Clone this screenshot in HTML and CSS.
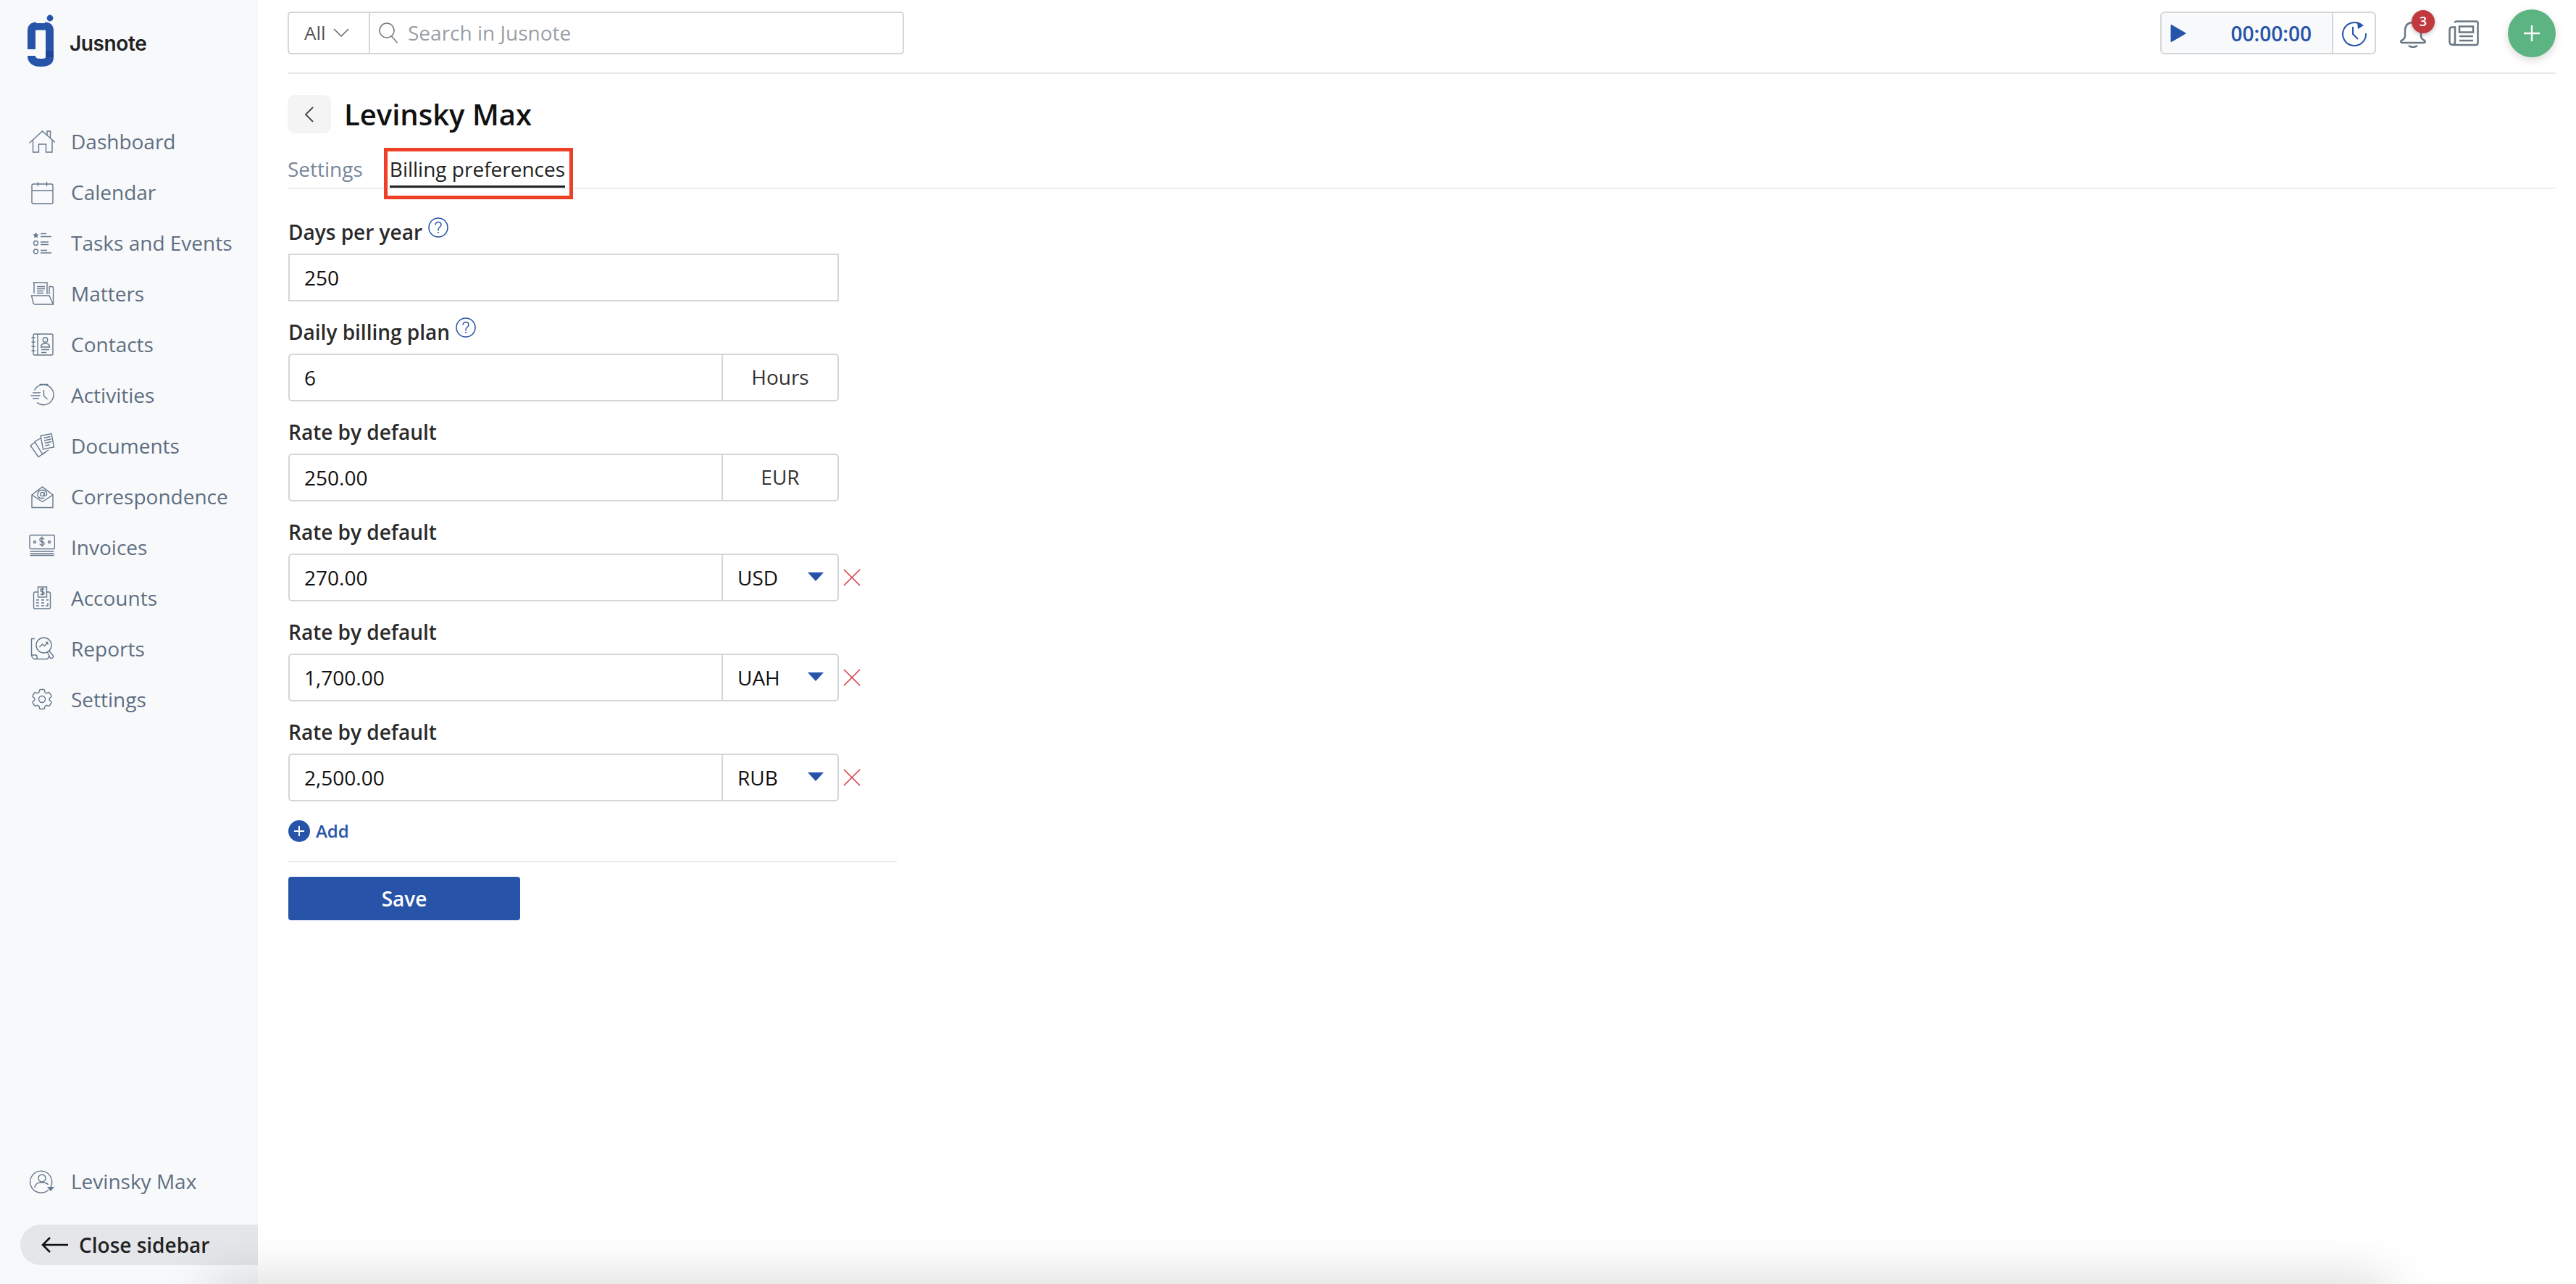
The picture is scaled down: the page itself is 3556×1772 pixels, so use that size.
FILE: index.html
```html
<!DOCTYPE html>
<html lang="en">
<head>
    <meta charset="UTF-8">
    <title>Jusnote</title>
    <link rel="stylesheet" href="styles.css">
</head>
<body>
<div class="app">
    <aside class="sidebar">
        <div class="logo">
            <svg class="logo-mark" viewBox="0 0 40 76" width="40" height="76">
                <circle cx="32" cy="6" r="4.400" fill="#2754a8"/>
                <path d="M6.500 49V23Q6.500 17 13 17H25Q31.500 17 31.500 23V60Q31.500 67.500 19 67.500Q6.500 67.500 6.500 58" fill="none" stroke="#2754a8" stroke-width="11"/>
                <rect x="26" y="51" width="11" height="9" fill="#1f4596"/>
                <rect x="0" y="50" width="13" height="2.500" fill="#f8f9fb"/>
                <rect x="13" y="11" width="12" height="2" fill="#f8f9fb"/>
            </svg>
            <span class="logo-text">Jusnote</span>
        </div>
        <nav class="nav">
            <a class="nav-item">
                <svg class="nav-icon" viewBox="0 0 36 36"><path d="M0.500 20.500 18.500 4 36 19.500M25 10V4h4.500v10M5.500 16.500V33h8V22h10v11h8.500V16.500"/></svg>
                <span>Dashboard</span>
            </a>
            <a class="nav-item">
                <svg class="nav-icon" viewBox="0 0 36 36"><rect x="4" y="7" width="29" height="27" rx="2"/><path d="M4 16h29M12.500 4v6M24.500 4v6"/></svg>
                <span>Calendar</span>
            </a>
            <a class="nav-item">
                <svg class="nav-icon" viewBox="0 0 36 36"><path d="M9.500 3.500 10.800 6.200 13.500 6.500 11.500 8.500 12 11.200 9.500 9.900 7 11.200 7.500 8.500 5.500 6.500 8.200 6.200Z" fill="#66788c" stroke="none"/><circle cx="9.500" cy="18.500" r="3"/><circle cx="9.500" cy="30" r="3"/><path d="M16 5.500h8M16 9.500h15M16 17h11M16 20.500h11M16 28.500h9M16 32h15"/></svg>
                <span>Tasks and Events</span>
            </a>
            <a class="nav-item">
                <svg class="nav-icon" viewBox="0 0 36 36"><path d="M7 18V4.500Q7 3 5.500 3H25v16M5.500 3H8M11 8.500h11M11 11.500h11M11 14.500h9M11 17.500h9M28 8.500h3.500q2 0 2 2V32M28 8.500v10.500"/><path d="M3.500 21H28l5.500 12H8.500Q7 33 6 31.500Z"/></svg>
                <span>Matters</span>
            </a>
            <a class="nav-item">
                <svg class="nav-icon" viewBox="0 0 36 36"><rect x="6" y="4" width="27" height="29" rx="2"/><path d="M12 4v29M3.500 9h5M3.500 15h5M3.500 21h5M3.500 27h5"/><circle cx="22.500" cy="12" r="3.200"/><path d="M16.500 22q0-5 6-5t6 5ZM17 25.500h11M17 29.500h7"/></svg>
                <span>Contacts</span>
            </a>
            <a class="nav-item">
                <svg class="nav-icon" viewBox="0 0 36 36"><path d="M14.500 3.500h12M7.500 11.500A14 14 0 1 1 11 28.500"/><path d="M20.500 11v8.500l5 4.500M5 15h11M2.500 19h13M5 23h9"/></svg>
                <span>Activities</span>
            </a>
            <a class="nav-item">
                <svg class="nav-icon" viewBox="0 0 36 36"><path d="M16 4.500 31 1.500 34.500 20 19.500 23Z"/><path d="M20.500 7.500l9-2M21 11l9.500-2M21.700 14.500l9.500-2M22.400 18l6-1.300"/><path d="M16.500 7.500 8 12.500 18.500 29.500 27 24"/><path d="M9 13 2 18 13 33.500 23 27"/></svg>
                <span>Documents</span>
            </a>
            <a class="nav-item">
                <svg class="nav-icon" viewBox="0 0 36 36"><path d="M4 16V33.500H33V16M4 16 18.500 5 33 16 18.500 25.500Z"/><circle cx="18.500" cy="15" r="2.600"/><path d="M21.100 12.500v3.500q0 2 1.900 1.200 2-1 1.500-3.500-1-4.500-6-4.500-6 0-6.500 5.500-.4 5.500 5.500 6 2 0 3.500-.7"/></svg>
                <span>Correspondence</span>
            </a>
            <a class="nav-item">
                <svg class="nav-icon" viewBox="0 0 36 36"><rect x="1" y="1.500" width="34.500" height="19" rx="2"/><path d="M1.500 24h33M1.500 27h33M1.500 29.500h33M21 7.500q-1-2-3-2-3 0-3 2.500t3 2.500q3 .5 3 2.800T18 15.500q-2.300 0-3.300-2M18 3.500v14"/><circle cx="8" cy="11" r="1.500"/><circle cx="28" cy="11" r="1.500"/></svg>
                <span>Invoices</span>
            </a>
            <a class="nav-item">
                <svg class="nav-icon" viewBox="0 0 36 36"><path d="M12.500 10H8.500q-2 0-2 2V31q0 2 2 2h19q2 0 2-2V12q0-2-2-2h-4"/><rect x="12.500" y="3" width="12" height="14"/><path d="M21 6.500q-1-1-2.500-1-2.500 0-2.500 2t2.500 2.200q2.500.3 2.500 2t-2.500 2q-1.500 0-2.500-1M18.500 4v10.500M10 21h4M17 21h4M24 21h3M10 25h4M17 25h4M10 29h4M17 29h4M26 25v4h-3"/></svg>
                <span>Accounts</span>
            </a>
            <a class="nav-item">
                <svg class="nav-icon" viewBox="0 0 36 36"><path d="M8 4.500H3.500V27q0 3 3 5.500H24q3 0 3-3v-1M3.500 27H9q2 0 2 2v3.500"/><circle cx="20.500" cy="13.500" r="10.500"/><path d="M14.500 16l4-4 3 2.500 4.500-5M26 9.500h-3M26 9.500v3M27.500 21l5.500 6.500q1.500 2-.5 3.500t-3.500-.5L25.500 23"/></svg>
                <span>Reports</span>
            </a>
            <a class="nav-item">
                <svg class="nav-icon nav-icon-fine" viewBox="0 0 24 24"><path d="M9.594 3.940c.09-.542.56-.94 1.110-.94h2.593c.55 0 1.020.398 1.110.94l.213 1.281c.063.374.313.686.645.870.074.040.147.083.22.127.325.196.72.257 1.075.124l1.217-.456a1.125 1.125 0 0 1 1.370.49l1.296 2.247a1.125 1.125 0 0 1-.26 1.431l-1.003.827c-.293.241-.438.613-.43.992a7.723 7.723 0 0 1 0 .255c-.008.378.137.75.43.991l1.004.827c.424.35.534.955.26 1.430l-1.298 2.247a1.125 1.125 0 0 1-1.369.491l-1.217-.456c-.355-.133-.75-.072-1.076.124a6.470 6.470 0 0 1-.22.128c-.331.183-.581.495-.644.869l-.213 1.281c-.09.543-.56.94-1.110.94h-2.594c-.55 0-1.019-.398-1.110-.94l-.213-1.281c-.062-.374-.312-.686-.644-.87a6.520 6.520 0 0 1-.22-.127c-.325-.196-.72-.257-1.076-.124l-1.217.456a1.125 1.125 0 0 1-1.369-.49l-1.297-2.247a1.125 1.125 0 0 1 .26-1.431l1.004-.827c.292-.24.437-.613.43-.991a6.932 6.932 0 0 1 0-.255c.007-.38-.138-.751-.43-.992l-1.004-.827a1.125 1.125 0 0 1-.26-1.430l1.297-2.247a1.125 1.125 0 0 1 1.370-.491l1.216.456c.356.133.751.072 1.076-.124.072-.044.146-.086.22-.128.332-.183.582-.495.644-.869l.214-1.280Z"/><circle cx="12" cy="12" r="3"/></svg>
                <span>Settings</span>
            </a>
        </nav>
        <a class="nav-item nav-user">
            <svg class="nav-icon" viewBox="0 0 36 36"><path d="M30 26A15 15 0 1 0 27 30"/><circle cx="18" cy="14" r="5"/><path d="M8 27q1-6.500 7-7h6q4 .5 5.500 3"/><path d="M25 26h10l-5 6Z" fill="#66788c" stroke="none"/></svg>
            <span>Levinsky Max</span>
        </a>
        <div class="close-sidebar">
            <svg viewBox="0 0 38 24" width="38" height="24"><path d="M37 12H2M12 2 2 12l10 10" fill="none" stroke="#111" stroke-width="2.600"/></svg>
            <span>Close sidebar</span>
        </div>
    </aside>

    <main class="main">
        <header class="topbar">
            <div class="search">
                <div class="search-type">
                    <span>All</span>
                    <svg viewBox="0 0 22 12" width="22" height="12"><path d="M1 1l10 10L21 1" fill="none" stroke="#666" stroke-width="1.500"/></svg>
                </div>
                <div class="search-field">
                    <svg viewBox="0 0 28 30" width="28" height="30"><circle cx="12" cy="12" r="10" fill="none" stroke="#777" stroke-width="1.500"/><path d="M18.500 20l8 9" stroke="#777" stroke-width="1.500"/></svg>
                    <span>Search in Jusnote</span>
                </div>
            </div>
            <div class="top-actions">
                <div class="timer">
                    <div class="timer-main">
                        <svg viewBox="0 0 22 26" width="22" height="26"><path d="M1.500 2 20.500 13 1.500 24Z" fill="#2754a8" stroke="#2754a8" stroke-width="2" stroke-linejoin="round"/></svg>
                        <span class="timer-time">00:00:00</span>
                    </div>
                    <div class="timer-history">
                        <svg viewBox="0 0 36 36" width="36" height="36"><path d="M28 6.500A16 16 0 1 0 34 18" fill="none" stroke="#2754a8" stroke-width="2"/><path d="M22 2l9 5-8 5Z" fill="#2754a8"/><path d="M16 9v10l7 7" fill="none" stroke="#2754a8" stroke-width="2"/></svg>
                    </div>
                </div>
                <div class="bell">
                    <svg viewBox="0 0 36 40" width="36" height="40"><path d="M18 5Q8 5 7 15V23Q7 28 2 30Q0 32 3 33H33Q36 32 34 30Q29 28 29 23V15Q28 5 18 5Z" fill="none" stroke="#6a7785" stroke-width="2.500"/><path d="M12 37q6 4 12 0" fill="none" stroke="#6a7785" stroke-width="2.500"/></svg>
                    <span class="badge">3</span>
                </div>
                <svg class="news" viewBox="0 0 42 36" width="42" height="36"><path d="M9 3.500Q9 1.500 11 1.500H38Q40.500 1.500 40.500 3.500V31Q40.500 34 38 34H7Q1.500 34 1.500 30V13Q1.500 9.500 5 9.500H9V30Q9 34 6 34" fill="none" stroke="#6a7785" stroke-width="2.500"/><rect x="15" y="8.500" width="19" height="8" fill="none" stroke="#6a7785" stroke-width="2.500"/><path d="M15 22h19M15 28h19" stroke="#6a7785" stroke-width="2.500"/></svg>
                <div class="add-round">
                    <svg viewBox="0 0 24 24" width="24" height="24"><path d="M12 1v22M1 12h22" stroke="#fff" stroke-width="2.400"/></svg>
                </div>
            </div>
        </header>

        <div class="page-head">
            <div class="back">
                <svg viewBox="0 0 14 24" width="14" height="24"><path d="M12 2 2 12l10 10" fill="none" stroke="#444" stroke-width="1.800"/></svg>
            </div>
            <h1>Levinsky Max</h1>
        </div>

        <div class="tabs">
            <a class="tab">Settings</a>
            <a class="tab tab-active">Billing preferences<span class="annotation"></span></a>
        </div>

        <form class="form">
            <div class="field">
                <label>Days per year
                    <svg class="help" viewBox="0 0 28 28" width="28" height="28"><circle cx="14" cy="14" r="13" fill="none" stroke="#2754a8" stroke-width="1.500"/><path d="M10 10.500q.5-4 4-4t4 3.500q0 2-2 3.500t-2 3.500v1.500M14 20v2" fill="none" stroke="#2754a8" stroke-width="1.500"/></svg>
                </label>
                <div class="control control-square"><input type="text" value="250"></div>
            </div>
            <div class="field">
                <label>Daily billing plan
                    <svg class="help" viewBox="0 0 28 28" width="28" height="28"><circle cx="14" cy="14" r="13" fill="none" stroke="#2754a8" stroke-width="1.500"/><path d="M10 10.500q.5-4 4-4t4 3.500q0 2-2 3.500t-2 3.500v1.500M14 20v2" fill="none" stroke="#2754a8" stroke-width="1.500"/></svg>
                </label>
                <div class="control"><input type="text" value="6"><div class="unit">Hours</div></div>
            </div>
            <div class="field">
                <label>Rate by default</label>
                <div class="control"><input type="text" value="250.00"><div class="unit">EUR</div></div>
            </div>
            <div class="field">
                <label>Rate by default</label>
                <div class="control-row">
                    <div class="control"><input type="text" value="270.00"><div class="unit unit-select">USD<i class="caret"></i></div></div>
                    <svg class="remove" viewBox="0 0 24 24" width="24" height="24"><path d="M1 1l22 22M23 1 1 23" stroke="#d9434a" stroke-width="1.700"/></svg>
                </div>
            </div>
            <div class="field">
                <label>Rate by default</label>
                <div class="control-row">
                    <div class="control"><input type="text" value="1,700.00"><div class="unit unit-select">UAH<i class="caret"></i></div></div>
                    <svg class="remove" viewBox="0 0 24 24" width="24" height="24"><path d="M1 1l22 22M23 1 1 23" stroke="#d9434a" stroke-width="1.700"/></svg>
                </div>
            </div>
            <div class="field">
                <label>Rate by default</label>
                <div class="control-row">
                    <div class="control"><input type="text" value="2,500.00"><div class="unit unit-select">RUB<i class="caret"></i></div></div>
                    <svg class="remove" viewBox="0 0 24 24" width="24" height="24"><path d="M1 1l22 22M23 1 1 23" stroke="#d9434a" stroke-width="1.700"/></svg>
                </div>
            </div>
            <a class="add-link">
                <svg viewBox="0 0 30 30" width="30" height="30"><circle cx="15" cy="15" r="15" fill="#2754a8"/><path d="M15 8v14M8 15h14" stroke="#fff" stroke-width="2"/></svg>
                <span>Add</span>
            </a>
            <div class="form-footer">
                <button type="button" class="save">Save</button>
            </div>
        </form>
    </main>
</div>
<div class="bottom-shade"></div>
</body>
</html>
```

FILE: styles.css
```css
html, body {
    margin: 0;
    padding: 0;
    height: 100%;
    overflow: hidden;
    background-color: #fff;
}

body {
    font-family: "Open Sans", "Noto Sans", sans-serif;
    color: #222;
}

svg {
    display: block;
    flex: none;
}

.app {
    display: flex;
    height: 100vh;
}

/* sidebar */
.sidebar {
    width: 356px;
    flex: none;
    display: flex;
    flex-direction: column;
    background-color: #f8f9fb;
    box-sizing: border-box;
}

.logo {
    display: flex;
    align-items: flex-start;
    padding: 19px 0 0 37px;
    height: 160px;
    box-sizing: border-box;
}

.logo-text {
    font-family: Inter, sans-serif;
    font-weight: 600;
    font-size: 28px;
    letter-spacing: -0.4px;
    color: #222;
    margin: 24px 0 0 19px;
}

.nav {
    display: flex;
    flex-direction: column;
}

.nav-item {
    display: flex;
    align-items: center;
    height: 70px;
    padding-left: 40px;
    font-size: 28px;
    color: #5f6f82;
}

.nav-icon {
    width: 36px;
    height: 36px;
    margin-right: 22px;
    fill: none;
    stroke: #66788c;
    stroke-width: 1.400;
}

.nav-icon-fine {
    stroke-width: 0.950;
}

.nav-user {
    margin-top: auto;
    margin-bottom: 25px;
}

.close-sidebar {
    display: flex;
    align-items: center;
    height: 56px;
    margin: 0 0 26px 28px;
    padding-left: 29px;
    background-color: #e4e6e9;
    border-radius: 28px 0 0 28px;
    font-size: 28px;
    font-weight: 600;
    color: #222;
}

.close-sidebar svg {
    margin-right: 14px;
}

/* top */
.main {
    flex: 1;
    min-width: 0;
    padding: 0 28px 0 41px;
}

.topbar {
    display: flex;
    justify-content: space-between;
    align-items: center;
    height: 102px;
    box-sizing: border-box;
    padding-bottom: 9px;
    border-bottom: 2px solid #e6e8eb;
}

.search {
    display: flex;
    width: 851px;
    height: 59px;
    box-sizing: border-box;
    border: 2px solid #d5d6d8;
    border-radius: 5px;
}

.search-type {
    display: flex;
    align-items: center;
    width: 112px;
    box-sizing: border-box;
    padding-left: 21px;
    padding-bottom: 2px;
    gap: 10px;
    border-right: 2px solid #d5d6d8;
    font-size: 26px;
    color: #555;
}

.search-field {
    display: flex;
    align-items: center;
    gap: 13px;
    padding-left: 11px;
    padding-bottom: 2px;
    font-size: 28px;
    color: #999fa6;
}

.top-actions {
    display: flex;
    align-items: center;
}

.timer {
    display: flex;
    width: 298px;
    height: 59px;
    box-sizing: border-box;
    border: 2px solid #d5d6d8;
    border-radius: 6px;
    margin-right: 33px;
    overflow: hidden;
}

.timer-main {
    display: flex;
    align-items: center;
    justify-content: space-between;
    width: 237px;
    box-sizing: border-box;
    padding: 0 28px 0 12px;
    background-color: #f8f9fb;
    border-right: 2px solid #d5d6d8;
}

.timer-time {
    font-size: 28px;
    font-weight: 600;
    color: #2754a8;
}

.timer-history {
    flex: 1;
    display: flex;
    align-items: center;
    justify-content: center;
}

.bell {
    position: relative;
    width: 36px;
    height: 40px;
    margin-right: 31px;
}

.badge {
    position: absolute;
    top: -12px;
    left: 16px;
    width: 32px;
    height: 32px;
    border-radius: 50%;
    background-color: #c0393f;
    box-shadow: 0 2px 6px rgba(0, 0, 0, 0.25);
    color: #fff;
    font-size: 18px;
    font-weight: 600;
    line-height: 30px;
    text-align: center;
}

.news {
    margin-right: 40px;
}

.add-round {
    display: flex;
    align-items: center;
    justify-content: center;
    width: 66px;
    height: 66px;
    border-radius: 50%;
    background-color: #5bb482;
    box-shadow: 0 4px 12px rgba(0, 0, 0, 0.15);
}

/* page */
.page-head {
    display: flex;
    align-items: center;
    height: 53px;
    margin-top: 29px;
}

.back {
    display: flex;
    align-items: center;
    justify-content: center;
    width: 60px;
    height: 53px;
    border-radius: 10px;
    background-color: #f4f4f5;
    margin-right: 18px;
}

h1 {
    margin: 0;
    font-size: 40px;
    font-weight: 600;
    line-height: 53px;
    color: #111;
}

.tabs {
    display: flex;
    height: 49px;
    margin-top: 26px;
    border-bottom: 2px solid #eeeff1;
}

.tab {
    position: relative;
    height: 49px;
    box-sizing: border-box;
    font-size: 28px;
    line-height: 47px;
    color: #76869a;
    margin-right: 37px;
}

.tab-active {
    color: #222;
    border-bottom: 3px solid #222;
}

.annotation {
    position: absolute;
    top: -6px;
    left: -8px;
    right: -11px;
    bottom: -19px;
    border: 5px solid #ee4026;
}

/* form */
.form {
    width: 840px;
    margin: 39px 0 0 1px;
}

.field {
    margin-bottom: 22px;
}

.field label {
    display: flex;
    align-items: flex-start;
    height: 40px;
    margin-bottom: 10px;
    font-size: 28px;
    font-weight: 600;
    line-height: 40px;
    color: #2a2a2a;
}

.help {
    margin-left: 8px;
}

.control-row {
    display: flex;
    align-items: center;
}

.control {
    display: flex;
    width: 760px;
    height: 66px;
    box-sizing: border-box;
    border: 2px solid #d5d6d8;
    border-radius: 5px;
}

.control-square {
    border-radius: 0;
}

.control input {
    flex: 1;
    min-width: 0;
    padding: 0 0 0 20px;
    border: none;
    outline: none;
    background: none;
    font-family: inherit;
    font-size: 28px;
    color: #111;
}

.unit {
    display: flex;
    align-items: center;
    justify-content: center;
    width: 160px;
    box-sizing: border-box;
    padding-bottom: 3px;
    border-left: 2px solid #d5d6d8;
    font-size: 28px;
    color: #333;
}

.unit-select {
    justify-content: space-between;
    padding: 0 19px 0 20px;
    color: #111;
}

.caret {
    display: block;
    width: 0;
    height: 0;
    border-left: 11px solid transparent;
    border-right: 11px solid transparent;
    border-top: 12px solid #2754a8;
    margin-top: -2px;
}

.remove {
    margin-left: 6px;
}

.add-link {
    display: flex;
    align-items: center;
    gap: 8px;
    margin-top: 24px;
    font-size: 24px;
    font-weight: 600;
    color: #2754a8;
}

.form-footer {
    margin-top: 25px;
    padding-top: 20px;
    border-top: 2px solid #ebebeb;
}

.save {
    display: block;
    width: 320px;
    height: 60px;
    border: none;
    border-radius: 4px;
    background-color: #2754a8;
    color: #fff;
    font-family: inherit;
    font-size: 28px;
    font-weight: 600;
}

.bottom-shade {
    position: fixed;
    left: 290px;
    right: 260px;
    bottom: -40px;
    height: 40px;
    box-shadow: 0 0 70px rgba(0, 0, 0, 0.22);
    pointer-events: none;
}
```
